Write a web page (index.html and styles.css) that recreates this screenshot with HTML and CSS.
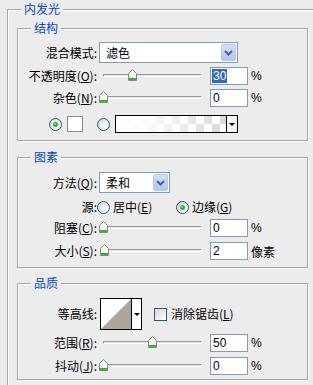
FILE: index.html
```html
<!DOCTYPE html>
<html>
<head>
<meta charset="utf-8">
<link rel="stylesheet" href="styles.css">
</head>
<body>
<div class="outer">
  <div class="legend">内发光</div>

  <section class="group g1">
    <div class="legend">结构</div>
    <div class="row r21 m7">
      <span class="lbl">混合模式:</span>
      <div class="select s-wide">
        <span class="val">滤色</span>
        <span class="btn"><svg width="9" height="6" viewBox="0 0 9 6"><polyline points="1,1 4.5,4.5 8,1" fill="none" stroke="#4d6185" stroke-width="2"/></svg></span>
      </div>
    </div>
    <div class="row r18 m4">
      <span class="lbl">不透明度(<u>O</u>):</span>
      <div class="slider"><div class="track"></div>
        <svg class="thumb" style="left:29px" width="9" height="12" viewBox="0 0 9 12"><path d="M0.5 4.5 L4.5 0.5 L8.5 4.5 V11.5 H0.5 Z" fill="#f6f6f2" stroke="#7d8c86"/><rect x="1" y="9" width="7" height="2" fill="#3bb13b"/></svg>
      </div>
      <div class="input"><span class="hl">30</span></div>
      <span class="unit">%</span>
    </div>
    <div class="row r18 m4">
      <span class="lbl">杂色(<u>N</u>):</span>
      <div class="slider"><div class="track"></div>
        <svg class="thumb" style="left:0px" width="9" height="12" viewBox="0 0 9 12"><path d="M0.5 4.5 L4.5 0.5 L8.5 4.5 V11.5 H0.5 Z" fill="#f6f6f2" stroke="#7d8c86"/><rect x="1" y="9" width="7" height="2" fill="#3bb13b"/></svg>
      </div>
      <div class="input">0</div>
      <span class="unit">%</span>
    </div>
    <div class="row r18 m8 colors">
      <svg class="radio" width="13" height="13" viewBox="0 0 13 13"><defs><radialGradient id="rg1" cx="0.65" cy="0.65" r="0.7"><stop offset="0" stop-color="#ffffff"/><stop offset="1" stop-color="#d8d8d2"/></radialGradient></defs><circle cx="6.5" cy="6.5" r="6" fill="url(#rg1)" stroke="#2f5687"/><circle cx="6.5" cy="6.5" r="2.5" fill="#2fae2f"/><circle cx="6" cy="6" r="1" fill="#7fe07f"/></svg>
      <span class="swatch"></span>
      <svg class="radio r2" width="13" height="13" viewBox="0 0 13 13"><defs><radialGradient id="rg2" cx="0.65" cy="0.65" r="0.7"><stop offset="0" stop-color="#ffffff"/><stop offset="1" stop-color="#d8d8d2"/></radialGradient></defs><circle cx="6.5" cy="6.5" r="6" fill="url(#rg2)" stroke="#2f5687"/></svg>
      <div class="grad"><span class="grad-fill"></span><span class="grad-btn"><i class="tri"></i></span></div>
    </div>
  </section>

  <section class="group g2">
    <div class="legend">图素</div>
    <div class="row r21 m8">
      <span class="lbl">方法(<u>Q</u>):</span>
      <div class="select s-narrow">
        <span class="val">柔和</span>
        <span class="btn"><svg width="9" height="6" viewBox="0 0 9 6"><polyline points="1,1 4.5,4.5 8,1" fill="none" stroke="#4d6185" stroke-width="2"/></svg></span>
      </div>
    </div>
    <div class="row r16 m6">
      <span class="lbl">源:</span>
      <span class="opt o1">
        <svg class="radio" width="13" height="13" viewBox="0 0 13 13"><defs><radialGradient id="rg3" cx="0.65" cy="0.65" r="0.7"><stop offset="0" stop-color="#ffffff"/><stop offset="1" stop-color="#d8d8d2"/></radialGradient></defs><circle cx="6.5" cy="6.5" r="6" fill="url(#rg3)" stroke="#2f5687"/></svg>
        <span class="otext">居中(<u>E</u>)</span>
      </span>
      <span class="opt">
        <svg class="radio" width="13" height="13" viewBox="0 0 13 13"><defs><radialGradient id="rg4" cx="0.65" cy="0.65" r="0.7"><stop offset="0" stop-color="#ffffff"/><stop offset="1" stop-color="#d8d8d2"/></radialGradient></defs><circle cx="6.5" cy="6.5" r="6" fill="url(#rg4)" stroke="#2f5687"/><circle cx="6.5" cy="6.5" r="2.5" fill="#2fae2f"/><circle cx="6" cy="6" r="1" fill="#7fe07f"/></svg>
        <span class="otext">边缘(<u>G</u>)</span>
      </span>
    </div>
    <div class="row r18 m4">
      <span class="lbl">阻塞(<u>C</u>):</span>
      <div class="slider"><div class="track"></div>
        <svg class="thumb" style="left:0px" width="9" height="12" viewBox="0 0 9 12"><path d="M0.5 4.5 L4.5 0.5 L8.5 4.5 V11.5 H0.5 Z" fill="#f6f6f2" stroke="#7d8c86"/><rect x="1" y="9" width="7" height="2" fill="#3bb13b"/></svg>
      </div>
      <div class="input">0</div>
      <span class="unit">%</span>
    </div>
    <div class="row r18 m5">
      <span class="lbl">大小(<u>S</u>):</span>
      <div class="slider"><div class="track"></div>
        <svg class="thumb" style="left:1px" width="9" height="12" viewBox="0 0 9 12"><path d="M0.5 4.5 L4.5 0.5 L8.5 4.5 V11.5 H0.5 Z" fill="#f6f6f2" stroke="#7d8c86"/><rect x="1" y="9" width="7" height="2" fill="#3bb13b"/></svg>
      </div>
      <div class="input">2</div>
      <span class="unit cjk">像素</span>
    </div>
  </section>

  <section class="group g3">
    <div class="legend">品质</div>
    <div class="row r32 m8">
      <span class="lbl">等高线:</span>
      <div class="contour">
        <span class="cprev"><svg width="30" height="30" viewBox="0 0 30 30"><polygon points="0,30 30,0 30,30" fill="#aaa69a"/></svg></span>
        <span class="cbtn"><i class="tri"></i></span>
      </div>
      <svg class="check" width="13" height="13" viewBox="0 0 13 13"><defs><linearGradient id="cg" x1="0" y1="0" x2="1" y2="1"><stop offset="0" stop-color="#d6d6d0"/><stop offset="1" stop-color="#ffffff"/></linearGradient></defs><rect x="0.5" y="0.5" width="12" height="12" fill="url(#cg)" stroke="#2f5687"/></svg>
      <span class="ctext">消除锯齿(<u>L</u>)</span>
    </div>
    <div class="row r18 m4">
      <span class="lbl">范围(<u>R</u>):</span>
      <div class="slider"><div class="track"></div>
        <svg class="thumb" style="left:49px" width="9" height="12" viewBox="0 0 9 12"><path d="M0.5 4.5 L4.5 0.5 L8.5 4.5 V11.5 H0.5 Z" fill="#f6f6f2" stroke="#7d8c86"/><rect x="1" y="9" width="7" height="2" fill="#3bb13b"/></svg>
      </div>
      <div class="input">50</div>
      <span class="unit">%</span>
    </div>
    <div class="row r18 m5">
      <span class="lbl">抖动(<u>J</u>):</span>
      <div class="slider"><div class="track"></div>
        <svg class="thumb" style="left:0px" width="9" height="12" viewBox="0 0 9 12"><path d="M0.5 4.5 L4.5 0.5 L8.5 4.5 V11.5 H0.5 Z" fill="#f6f6f2" stroke="#7d8c86"/><rect x="1" y="9" width="7" height="2" fill="#3bb13b"/></svg>
      </div>
      <div class="input">0</div>
      <span class="unit">%</span>
    </div>
  </section>
</div>
</body>
</html>
```

FILE: styles.css
```css
html, body {
  margin: 0;
  padding: 0;
  background: #ececec;
  overflow: hidden;
}
body {
  width: 313px;
  height: 385px;
  font-family: "Noto Sans CJK SC", "Noto Sans", sans-serif;
  font-size: 12px;
  color: #000;
}
u { text-decoration: underline; text-underline-offset: 1px; }

.outer {
  margin: 9px 0 0 7px;
  height: 375px;
  border-top: 1px solid #a6a6a6;
  border-left: 1px solid #a6a6a6;
  box-shadow: inset 1px 1px #ffffff;
}
.legend {
  position: relative;
  margin: -8px 0 0 13px;
  padding: 0 3px;
  width: max-content;
  height: 14px;
  line-height: 14px;
  color: #0a46c8;
  background: #ececec;
}

.group {
  margin: 0 0 0 9px;
  width: 291px;
  box-sizing: border-box;
  border: 1px solid #a6a6a6;
  box-shadow: inset 1px 1px #ffffff, 1px 1px #ffffff;
}
.g1 { margin-top: 12px; padding-bottom: 7px; }
.g2 { margin-top: 16px; padding-bottom: 7px; }
.g3 { margin-top: 15px; padding-bottom: 4px; }

.row { display: flex; align-items: center; }
.r16 { height: 16px; }
.r18 { height: 18px; }
.r21 { height: 21px; }
.r32 { height: 32px; }
.m4 { margin-top: 4px; }
.m5 { margin-top: 5px; }
.m6 { margin-top: 6px; }
.m7 { margin-top: 7px; }
.m8 { margin-top: 8px; }

.lbl {
  flex: none;
  width: 79px;
  text-align: right;
  white-space: nowrap;
  line-height: 14px;
}

.select {
  margin-left: 2px;
  height: 21px;
  box-sizing: border-box;
  border: 1px solid #7f9db9;
  background: #fff;
  display: flex;
  align-items: center;
}
.s-wide { width: 139px; }
.s-narrow { width: 71px; }
.select .val { flex: 1; padding-left: 6px; line-height: 14px; }
.select .btn {
  width: 15px;
  height: 17px;
  margin: 1px;
  box-sizing: border-box;
  border: 1px solid #b6c8f2;
  border-radius: 2px;
  background: linear-gradient(#d2dffc, #b3c6f4);
  display: flex;
  align-items: center;
  justify-content: center;
}

.slider {
  position: relative;
  flex: none;
  margin-left: 2px;
  width: 107px;
  height: 18px;
}
.track {
  position: absolute;
  left: 4px;
  top: 7px;
  width: 99px;
  height: 3px;
  box-sizing: border-box;
  border-top: 1px solid #9a9a9a;
  border-left: 1px solid #9a9a9a;
  border-bottom: 1px solid #ffffff;
  border-right: 1px solid #ffffff;
  background: #e2e2e2;
  border-radius: 1px;
}
.thumb { position: absolute; top: 2px; display: block; }

.input {
  flex: none;
  margin-left: 4px;
  width: 38px;
  height: 18px;
  box-sizing: border-box;
  border: 1px solid #7f9db9;
  background: #fff;
  padding-left: 2px;
  font-family: "Liberation Sans", Arial, sans-serif;
  font-size: 12px;
  line-height: 16px;
}
.hl { background: #316ac5; color: #fff; display: inline-block; line-height: 14px; padding: 0 1px; margin-left: -1px; }
.unit {
  margin-left: 3px;
  font-family: "Liberation Sans", Arial, sans-serif;
  font-size: 12px;
}
.unit.cjk { font-family: "Noto Sans CJK SC", sans-serif; }

.colors { padding-left: 31px; }
.radio { display: block; flex: none; }
.swatch {
  margin-left: 5px;
  width: 16px;
  height: 16px;
  box-sizing: border-box;
  border: 1px solid #8a8a8a;
  background: #fff;
}
.r2 { margin-left: 14px; }
.grad {
  margin-left: 5px;
  width: 123px;
  height: 18px;
  box-sizing: border-box;
  border: 1px solid #000;
  display: flex;
}
.grad-fill {
  flex: 1;
  background:
    linear-gradient(to right, #ffffff 0%, rgba(255,255,255,0.85) 30%, rgba(255,255,255,0) 100%),
    conic-gradient(#d9d9d9 90deg, #ffffff 90deg 180deg, #d9d9d9 180deg 270deg, #ffffff 270deg) 0 0 / 16px 16px;
}
.grad-btn {
  width: 10px;
  border-left: 1px solid #000;
  background: #f4f4f4;
  display: flex;
  align-items: center;
  justify-content: center;
}
.tri {
  display: block;
  width: 0;
  height: 0;
  border-left: 3px solid transparent;
  border-right: 3px solid transparent;
  border-top: 3px solid #000;
}

.opt { display: flex; align-items: center; }
.o1 { width: 79px; }
.otext { margin-left: 3px; line-height: 14px; }

.contour {
  margin-left: 3px;
  width: 42px;
  height: 32px;
  box-sizing: border-box;
  border: 1px solid #000;
  display: flex;
}
.cprev { width: 30px; height: 30px; background: #fff; }
.cprev svg { display: block; }
.cbtn {
  flex: 1;
  border-left: 1px solid #000;
  background: #fff;
  display: flex;
  align-items: center;
  justify-content: center;
}
.check { display: block; margin-left: 12px; flex: none; }
.ctext { margin-left: 4px; line-height: 14px; }
```
